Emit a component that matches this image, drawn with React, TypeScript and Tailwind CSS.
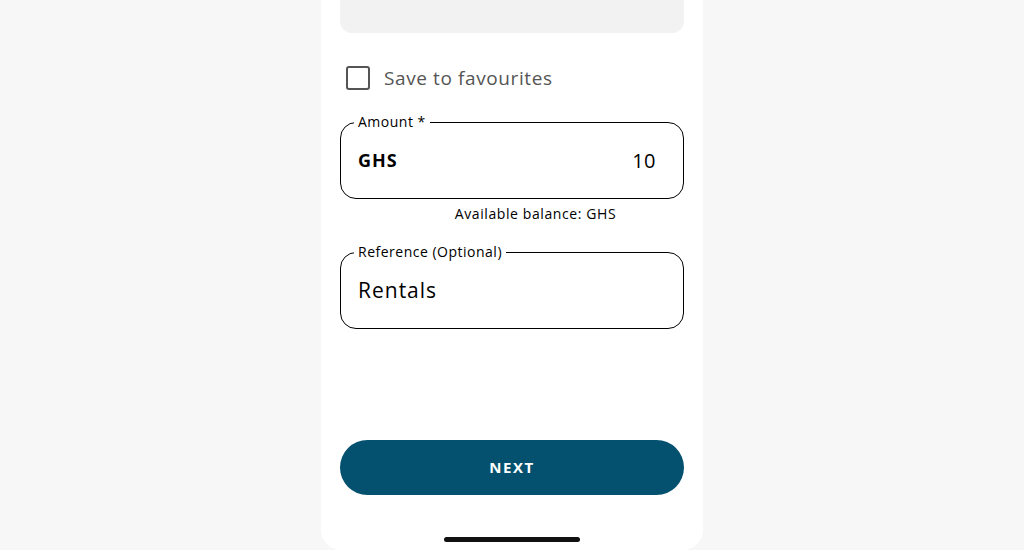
import React from "react";

const font = { fontFamily: "'Open Sans', 'Noto Sans', sans-serif" };

const OutlinedField = ({
  label,
  children,
}: {
  label: string;
  children: React.ReactNode;
}) => (
  <div className="relative h-[77px] rounded-[16px] border border-black px-[17px] flex items-center">
    <span className="absolute -top-[10px] left-[13px] bg-white px-[4px] text-[14px] leading-[18px] tracking-[0.5px] text-black">
      {label}
    </span>
    {children}
  </div>
);

const App = () => {
  return (
    <div
      className="h-[550px] w-full bg-[#f7f7f7] flex justify-center overflow-hidden"
      style={font}
    >
      <div className="w-[382px] h-full bg-white rounded-b-[20px] px-[19px] flex flex-col">
        <div className="h-[33px] bg-[#f2f2f2] rounded-b-[12px]" />

        <label className="mt-[33px] flex items-center gap-[14px] pl-[6px]">
          <span className="w-[24px] h-[24px] rounded-[3px] border-2 border-[#555555] bg-white" />
          <span className="text-[19px] leading-[22px] tracking-[0.6px] text-[#555555]">
            Save to favourites
          </span>
        </label>

        <div className="mt-[32px]">
          <OutlinedField label="Amount *">
            <div className="flex w-full items-center justify-between pr-[10px]">
              <span className="text-[18px] font-bold tracking-[1px] text-black">
                GHS
              </span>
              <span className="text-[20px] tracking-[0.5px] text-black">10</span>
            </div>
          </OutlinedField>
        </div>
        <div className="mt-[5px] flex justify-center pl-[47px] text-[14px] leading-[20px] tracking-[0.6px] text-black">
          Available balance: GHS
        </div>

        <div className="mt-[28px]">
          <OutlinedField label="Reference (Optional)">
            <span className="text-[21px] tracking-[1px] text-black">Rentals</span>
          </OutlinedField>
        </div>

        <button className="mt-[111px] h-[55px] w-full rounded-full bg-[#03516f] text-white text-[15px] font-bold tracking-[1.5px]">
          NEXT
        </button>

        <div className="mt-[42px] mx-auto h-[5px] w-[136px] rounded-full bg-[#111111]" />
      </div>
    </div>
  );
};

export default App;
